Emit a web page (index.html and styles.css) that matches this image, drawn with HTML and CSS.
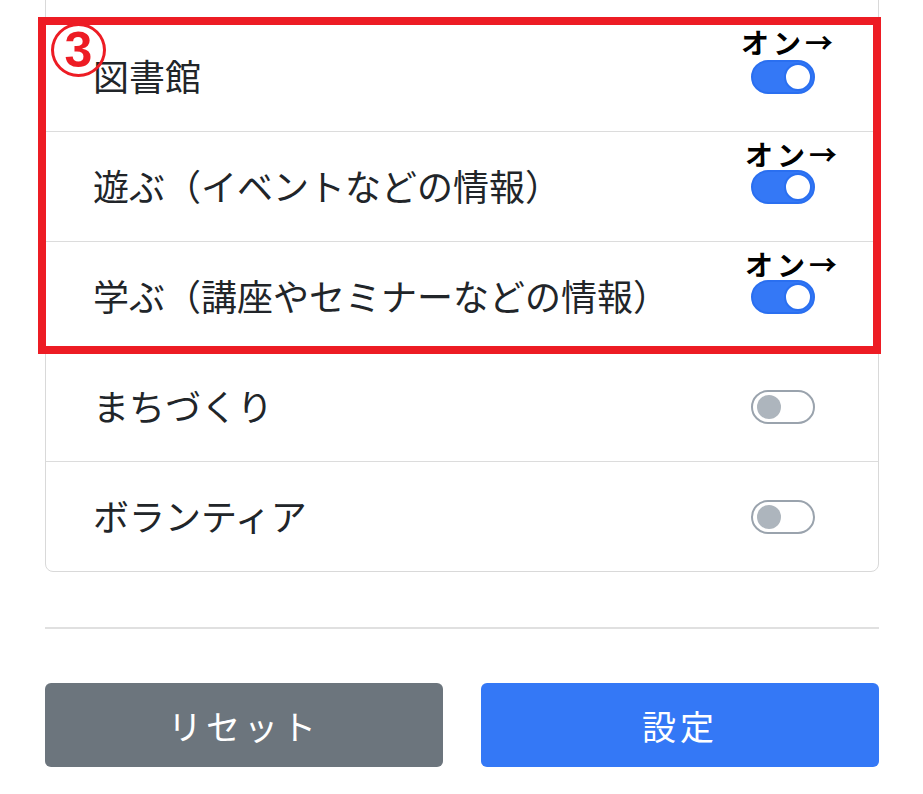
FILE: index.html
```html
<!DOCTYPE html>
<html lang="ja">
<head>
<meta charset="utf-8">
<title>通知設定</title>
<link rel="stylesheet" href="styles.css">
</head>
<body>
<div class="page">
  <div class="card">
    <div class="row row-prev"></div>
    <div class="row">
      <span class="label">図書館</span>
      <span class="switch on"></span>
      <span class="note note-1">オン→</span>
    </div>
    <div class="row">
      <span class="label">遊ぶ（イベントなどの情報）</span>
      <span class="switch on"></span>
      <span class="note note-2">オン→</span>
    </div>
    <div class="row">
      <span class="label">学ぶ（講座やセミナーなどの情報）</span>
      <span class="switch on"></span>
      <span class="note note-3">オン→</span>
    </div>
    <div class="row">
      <span class="label">まちづくり</span>
      <span class="switch"></span>
    </div>
    <div class="row">
      <span class="label">ボランティア</span>
      <span class="switch"></span>
    </div>
  </div>
  <div class="highlight"><span class="num">3</span></div>
  <hr class="divider">
  <div class="buttons">
    <button class="btn btn-reset">リセット</button>
    <button class="btn btn-submit">設定</button>
  </div>
</div>
</body>
</html>
```

FILE: styles.css
```css
html, body {
  margin: 0;
  padding: 0;
  background: #ffffff;
}
body {
  font-family: "Noto Sans CJK JP", "Noto Sans", sans-serif;
  color: #212529;
  overflow: hidden;
}
.page {
  position: relative;
  display: flow-root;
  padding: 0 44px 0 45px;
}
.card {
  margin-top: -89px;
  border: 1px solid #d9d9d9;
  border-radius: 8px;
  background: #fff;
}
.row {
  position: relative;
  height: 109px;
  display: flex;
  align-items: center;
  justify-content: space-between;
  padding: 0 63px 0 47px;
  border-bottom: 1px solid #dcdcdc;
}
.row:last-child {
  border-bottom: none;
}
.label {
  font-size: 36px;
  line-height: 1;
  letter-spacing: 0;
  margin-top: -3px;
}
.switch {
  position: relative;
  box-sizing: border-box;
  width: 64px;
  height: 34px;
  border: 2px solid #9aa3ad;
  border-radius: 17px;
  background: #fff;
  flex: none;
}
.switch::after {
  content: "";
  position: absolute;
  top: 3px;
  left: 4px;
  width: 24px;
  height: 24px;
  border-radius: 50%;
  background: #adb5bd;
}
.switch.on {
  background: #3478f6;
  border-color: #2a6ff0;
}
.switch.on::after {
  left: auto;
  right: 1px;
  top: 1px;
  width: 24px;
  height: 24px;
  background: #fff;
  border: 2px solid #2a6ff0;
}
.note {
  position: absolute;
  font-size: 28px;
  font-weight: 700;
  line-height: 1;
  letter-spacing: 4px;
  color: #000;
}
.note-1 { top: 6px; right: 41px; }
.note-2 { top: 8px; right: 37px; }
.note-3 { top: 8px; right: 37px; }
.highlight {
  position: absolute;
  top: 17px;
  left: 38px;
  width: 843px;
  height: 337px;
  box-sizing: border-box;
  border: 8px solid #ed1c24;
  pointer-events: none;
}
.num {
  position: absolute;
  top: -2px;
  left: 5px;
  box-sizing: border-box;
  width: 55px;
  height: 54px;
  border: 3px solid #ed1c24;
  border-radius: 50%;
  color: #ed1c24;
  font-family: "Liberation Sans", sans-serif;
  font-weight: 700;
  font-size: 50px;
  line-height: 48px;
  text-align: center;
}
.divider {
  margin: 55px 0 0;
  border: none;
  border-top: 2px solid #e0e0e0;
  height: 0;
}
.buttons {
  display: grid;
  grid-template-columns: 1fr 1fr;
  column-gap: 38px;
  margin-top: 54px;
}
.btn {
  height: 84px;
  border: none;
  border-radius: 6px;
  color: #fff;
  font-family: "Noto Sans CJK JP", "Noto Sans", sans-serif;
  font-size: 34px;
  letter-spacing: 4px;
  cursor: pointer;
}
.btn-reset {
  background: #6c757d;
}
.btn-submit {
  background: #3478f6;
}
```
